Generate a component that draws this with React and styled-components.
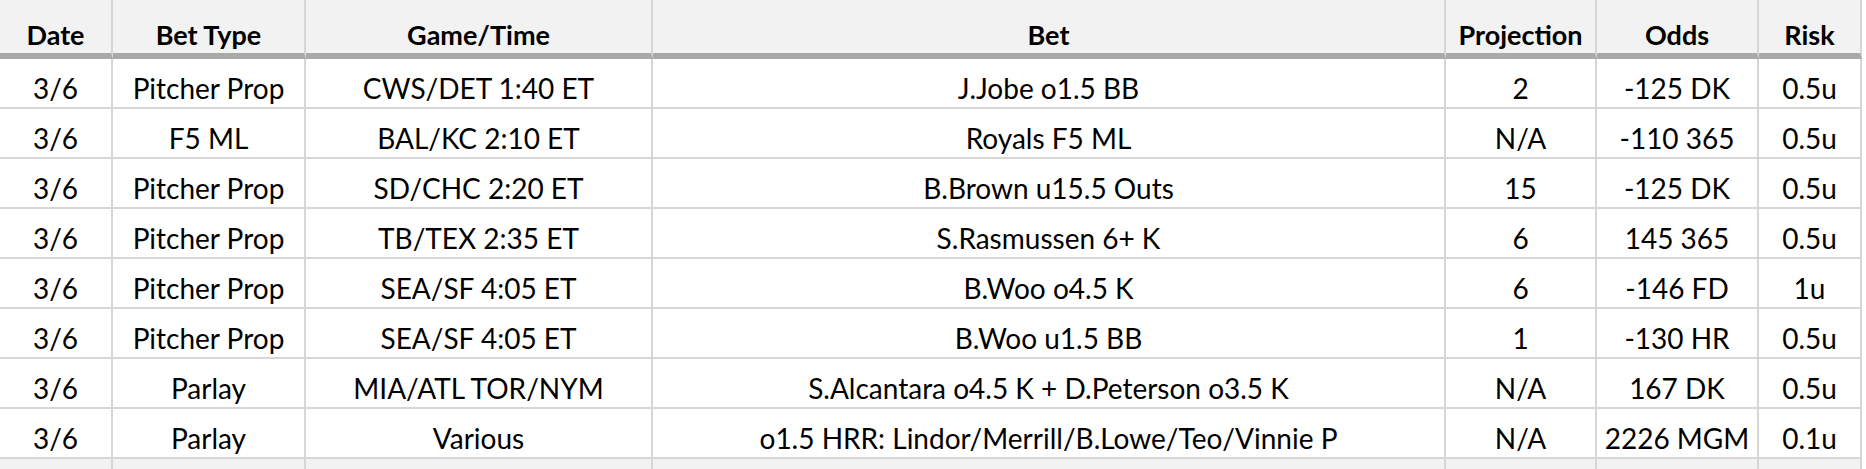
import styled, { createGlobalStyle } from "styled-components";

const Global = createGlobalStyle`
    body {
        margin: 0;
        background: #ffffff;
        font-family: Lato, "Open Sans", sans-serif;
        color: #000000;
    }
`;

const COLS = [113, 193, 347, 793, 151, 162, 103];

const Sheet = styled.div`
    display: grid;
    grid-template-columns: ${COLS.map((c) => c + "px").join(" ")};
    grid-template-rows: 59px repeat(8, 50px) 1fr;
    width: ${COLS.reduce((a, b) => a + b, 0)}px;
    height: 469px;
    overflow: hidden;
`;

const Cell = styled.div`
    box-sizing: border-box;
    display: flex;
    align-items: flex-end;
    justify-content: center;
    padding-bottom: 3px;
    border-right: 2px solid #d6d6d6;
    border-bottom: 2px solid #d6d6d6;
    font-size: 28px;
    line-height: 1.15;
    white-space: nowrap;
    overflow: hidden;
`;

const HeadCell = styled(Cell)`
    background: #f2f2f2;
    font-size: 27px;
    font-weight: 700;
    padding-bottom: 3px;
    border-bottom: 6px solid #a9a9a9;
`;

const BlankCell = styled(Cell)`
    background: #f2f2f2;
    border-bottom: none;
`;

const headers = ["Date", "Bet Type", "Game/Time", "Bet", "Projection", "Odds", "Risk"];

const rows = [
    ["3/6", "Pitcher Prop", "CWS/DET 1:40 ET", "J.Jobe o1.5 BB", "2", "-125 DK", "0.5u"],
    ["3/6", "F5 ML", "BAL/KC 2:10 ET", "Royals F5 ML", "N/A", "-110 365", "0.5u"],
    ["3/6", "Pitcher Prop", "SD/CHC 2:20 ET", "B.Brown u15.5 Outs", "15", "-125 DK", "0.5u"],
    ["3/6", "Pitcher Prop", "TB/TEX 2:35 ET", "S.Rasmussen 6+ K", "6", "145 365", "0.5u"],
    ["3/6", "Pitcher Prop", "SEA/SF 4:05 ET", "B.Woo o4.5 K", "6", "-146 FD", "1u"],
    ["3/6", "Pitcher Prop", "SEA/SF 4:05 ET", "B.Woo u1.5 BB", "1", "-130 HR", "0.5u"],
    ["3/6", "Parlay", "MIA/ATL TOR/NYM", "S.Alcantara o4.5 K + D.Peterson o3.5 K", "N/A", "167 DK", "0.5u"],
    ["3/6", "Parlay", "Various", "o1.5 HRR: Lindor/Merrill/B.Lowe/Teo/Vinnie P", "N/A", "2226 MGM", "0.1u"],
];

const App = () => {
    return (
        <>
            <Global />
            <Sheet>
                {headers.map((h) => (
                    <HeadCell key={h}>{h}</HeadCell>
                ))}
                {rows.map((r, i) =>
                    r.map((v, j) => <Cell key={i + "-" + j}>{v}</Cell>)
                )}
                {COLS.map((c, j) => (
                    <BlankCell key={"b" + j} />
                ))}
            </Sheet>
        </>
    );
};

export default App;
